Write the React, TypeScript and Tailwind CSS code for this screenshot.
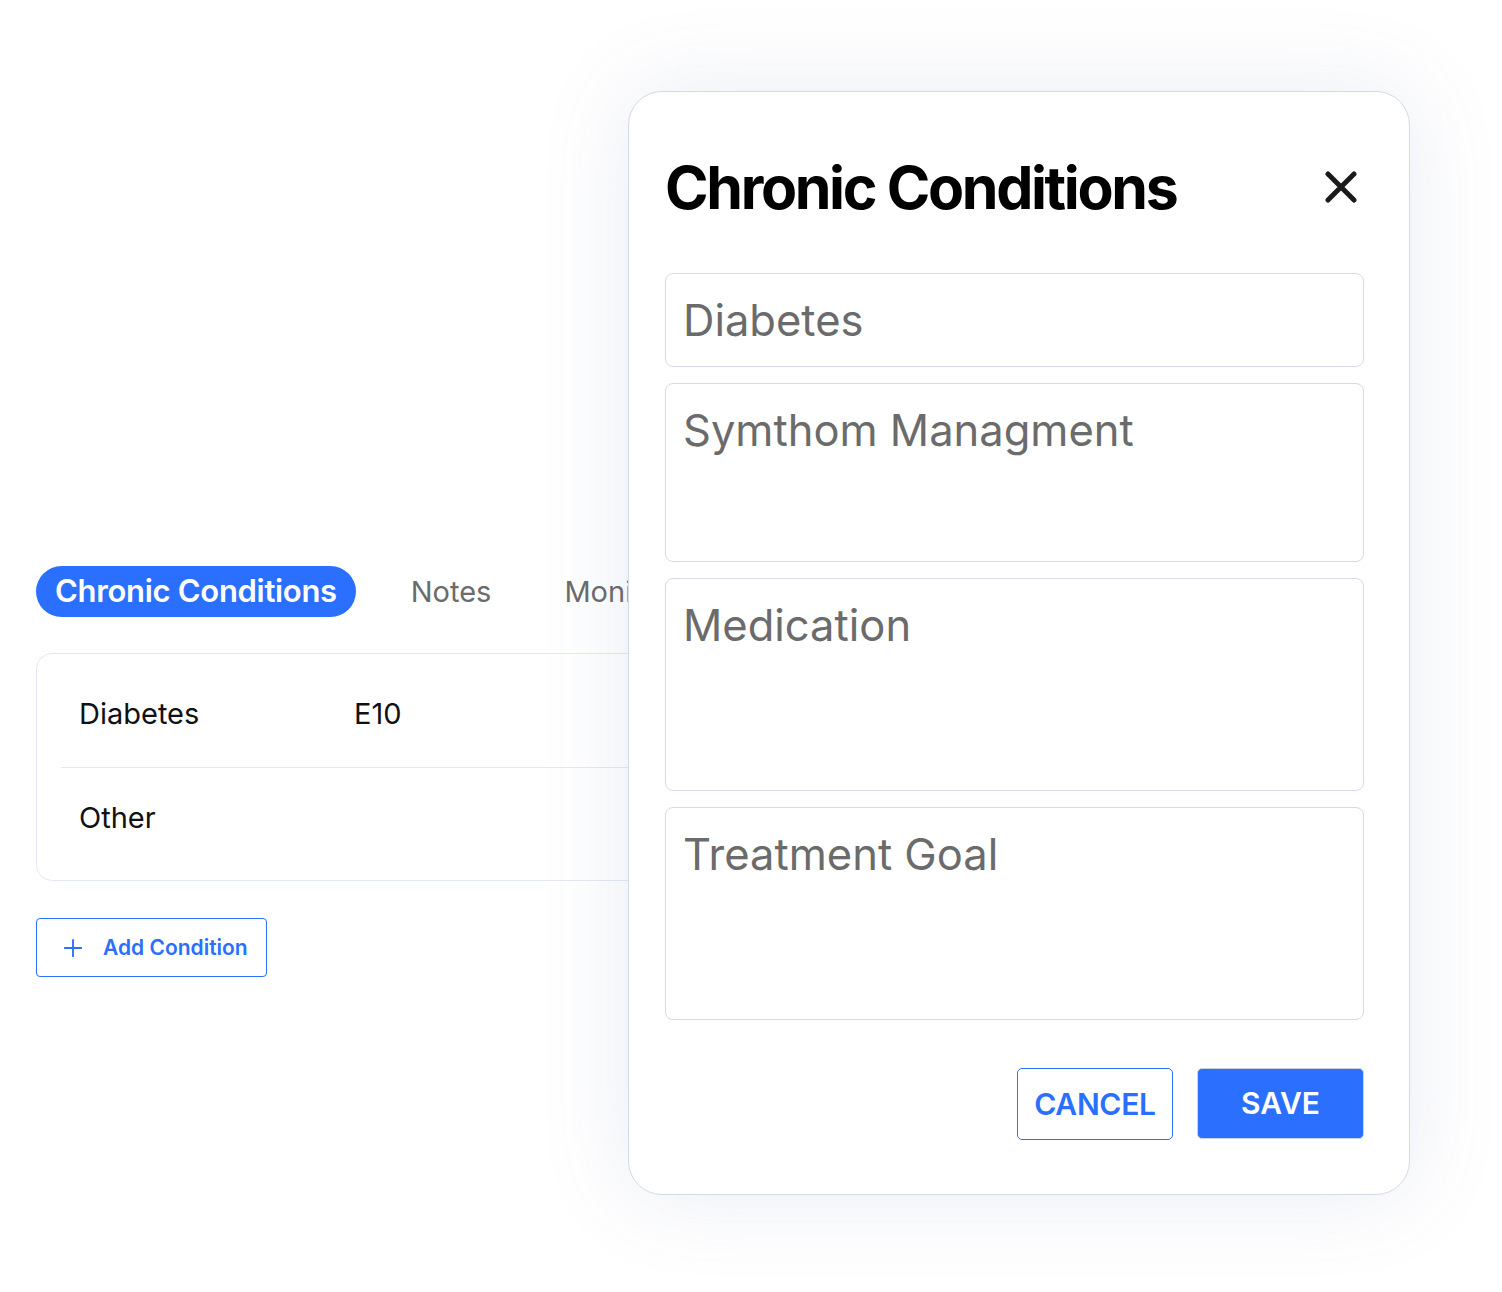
import { Plus } from "lucide-react";

const rows = [
  { name: "Diabetes", code: "E10", cls: "h-[114px] pt-[42px] border-b border-[#e3e8f3]" },
  { name: "Other", code: "", cls: "h-[112px] pt-[32px]" },
];

const fields = [
  { label: "Diabetes", h: "h-[94px]" },
  { label: "Symthom Managment", h: "h-[179px]" },
  { label: "Medication", h: "h-[213px]" },
  { label: "Treatment Goal", h: "h-[213px]" },
];

export default function App() {
  return (
    <div className="relative w-[1502px] h-[1292px] overflow-hidden bg-white font-['Inter',sans-serif]">
      {/* background page */}
      <div className="pt-[566px] pl-[36px]">
        <div className="flex items-center">
          <div className="h-[51px] px-[19px] rounded-full bg-[#2b6fff] text-white text-[31px] font-semibold tracking-[-0.01em] flex items-center">
            Chronic Conditions
          </div>
          <span className="ml-[55px] text-[29px] text-[#6b6b6b]">Notes</span>
          <span className="ml-[73px] text-[29px] text-[#6b6b6b]">Monitoring</span>
        </div>

        <div className="mt-[36px] w-[900px] rounded-[16px] border border-[#e3e8f3] pl-[24px]">
          {rows.map((r) => (
            <div key={r.name} className={`flex pl-[18px] text-[29px] leading-[36px] text-[#111] ${r.cls}`}>
              <span className="w-[275px]">{r.name}</span>
              <span>{r.code}</span>
            </div>
          ))}
        </div>

        <button className="mt-[37px] h-[59px] w-[231px] rounded-[4px] border-[1.5px] border-[#2b6fff] flex items-center pl-[22px] gap-[16px] text-[#2b6fff] text-[21px] font-semibold">
          <Plus size={28} strokeWidth={1.6} />
          Add Condition
        </button>
      </div>

      {/* modal */}
      <div className="absolute left-[628px] top-[91px] w-[782px] h-[1104px] rounded-[34px] bg-white border border-[#d3dbe7] shadow-[0_0_90px_rgba(90,110,170,0.13)] pl-[36px] pr-[45px] pt-[66px]">
        <div className="flex items-center justify-between">
          <h2 className="text-[59px] font-bold text-black tracking-[-0.04em] leading-none">Chronic Conditions</h2>
          <svg width="32" height="32" viewBox="0 0 32 32" className="mr-[7px] mt-[-2px]">
            <path d="M3 3 L29 29 M29 3 L3 29" stroke="#1a1a1a" strokeWidth="5" strokeLinecap="round" />
          </svg>
        </div>

        <div className="mt-[56px] flex flex-col gap-[16px]">
          {fields.map((f) => (
            <div
              key={f.label}
              className={`${f.h} rounded-[8px] border border-[#d3dbe7] px-[17px] pt-[20px] text-[43.5px] leading-[52px] text-[#6b6b6b]`}
            >
              {f.label}
            </div>
          ))}
        </div>

        <div className="mt-[48px] flex justify-end gap-[24px]">
          <button className="h-[72px] w-[156px] rounded-[5px] border-[1.5px] border-[#2b6fff] text-[#2b6fff] text-[30px] font-semibold tracking-[-0.01em]">
            CANCEL
          </button>
          <button className="h-[71px] w-[167px] rounded-[5px] bg-[#2b6fff] border border-[#c9d2de] text-white text-[30px] font-semibold">
            SAVE
          </button>
        </div>
      </div>
    </div>
  );
}
